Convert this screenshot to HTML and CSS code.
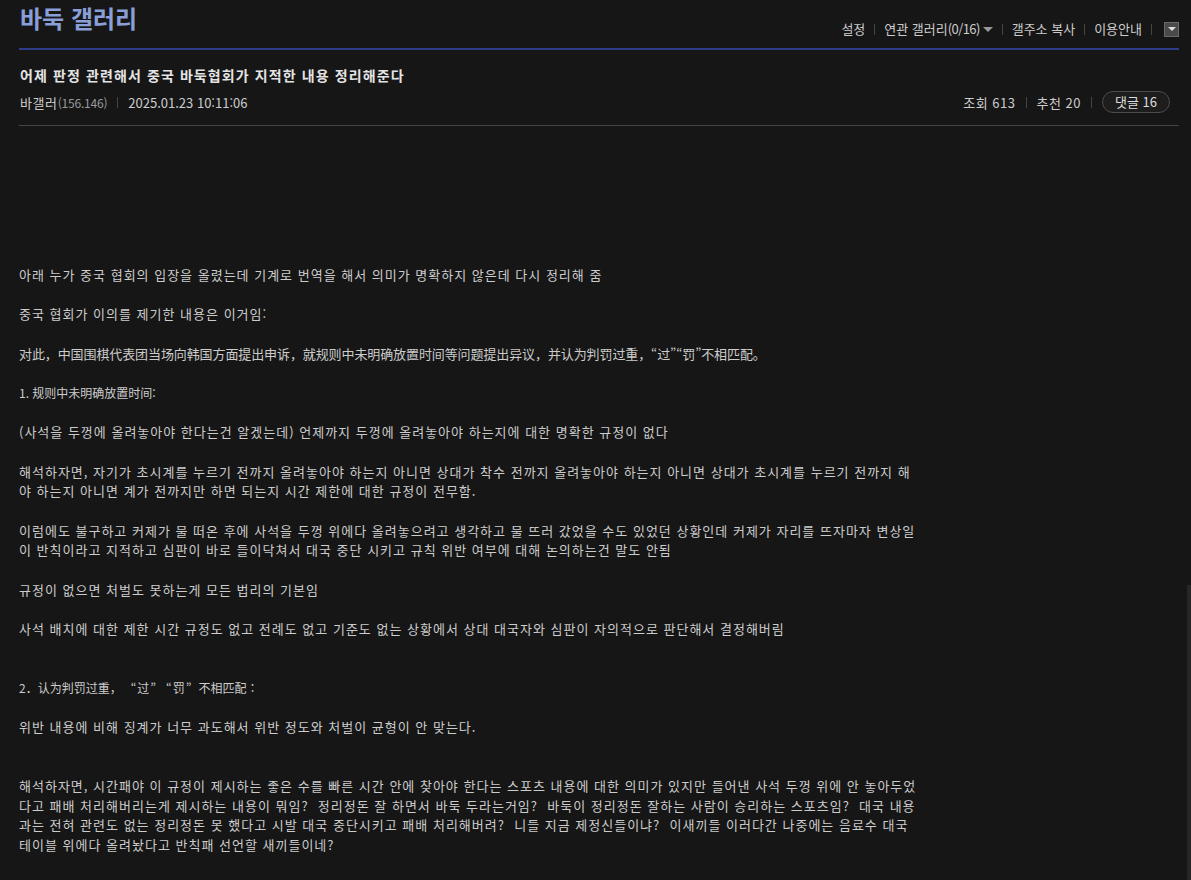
FILE: index.html
```html
<!DOCTYPE html>
<html lang="ko">
<head>
  <meta charset="UTF-8">
  <meta name="viewport" content="width=device-width, initial-scale=1.0">
  <title>바둑 갤러리</title>
  <link rel="stylesheet" href="styles.css">
</head>
<body>
  <div class="container">
    <header class="gall-head">
      <h2 class="gall-title">바둑 갤러리</h2>
      <ul class="gall-menu">
        <li>설정</li>
        <li class="sep"></li>
        <li>연관 갤러리<span class="num">(0/16)</span><span class="caret"></span></li>
        <li class="sep"></li>
        <li>갤주소 복사</li>
        <li class="sep"></li>
        <li>이용안내</li>
        <li class="sep"></li>
        <li><button class="more-btn"><span class="caret white"></span></button></li>
      </ul>
    </header>

    <div class="view-head">
      <h3 class="view-title">어제 판정 관련해서 중국 바둑협회가 지적한 내용 정리해준다</h3>
      <div class="view-info">
        <div class="writer">
          <span class="nick">바갤러</span><span class="ip">(156.146)</span>
          <span class="sep"></span>
          <span class="date">2025.01.23 10:11:06</span>
        </div>
        <div class="stats">
          <span>조회 613</span>
          <span class="sep"></span>
          <span>추천 20</span>
          <span class="sep"></span>
          <span class="reply-btn">댓글 16</span>
        </div>
      </div>
    </div>

    <div class="view-body">
      <div class="ad-space"></div>
      <p>아래 누가 중국 협회의 입장을 올렸는데 기계로 번역을 해서 의미가 명확하지 않은데 다시 정리해 줌</p>
      <p>중국 협회가 이의를 제기한 내용은 이거임:</p>
      <p class="zh">对此，中国围棋代表团当场向韩国方面提出申诉，就规则中未明确放置时间等问题提出异议，并认为判罚过重，“过”“罚”不相匹配。</p>
      <p class="zh-small">1. 规则中未明确放置时间:</p>
      <p>(사석을 두껑에 올려놓아야 한다는건 알겠는데) 언제까지 두껑에 올려놓아야 하는지에 대한 명확한 규정이 없다</p>
      <p>해석하자면, 자기가 초시계를 누르기 전까지 올려놓아야 하는지 아니면 상대가 착수 전까지 올려놓아야 하는지 아니면 상대가 초시계를 누르기 전까지 해야 하는지 아니면 계가 전까지만 하면 되는지 시간 제한에 대한 규정이 전무함.</p>
      <p>이럼에도 불구하고 커제가 물 떠온 후에 사석을 두껑 위에다 올려놓으려고 생각하고 물 뜨러 갔었을 수도 있었던 상황인데 커제가 자리를 뜨자마자 변상일이 반칙이라고 지적하고 심판이 바로 들이닥쳐서 대국 중단 시키고 규칙 위반 여부에 대해 논의하는건 말도 안됨</p>
      <p>규정이 없으면 처벌도 못하는게 모든 법리의 기본임</p>
      <p class="gap">사석 배치에 대한 제한 시간 규정도 없고 전례도 없고 기준도 없는 상황에서 상대 대국자와 심판이 자의적으로 판단해서 결정해버림</p>
      <p class="zh-small">2．认为判罚过重，<span class="quote">“过”</span><span class="quote">“罚”</span>不相匹配：</p>
      <p class="gap">위반 내용에 비해 징계가 너무 과도해서 위반 정도와 처벌이 균형이 안 맞는다.</p>
      <p>해석하자면, 시간패야 이 규정이 제시하는 좋은 수를 빠른 시간 안에 찾아야 한다는 스포츠 내용에 대한 의미가 있지만 들어낸 사석 두껑 위에 안 놓아두었다고 패배 처리해버리는게 제시하는 내용이 뭐임?&nbsp; 정리정돈 잘 하면서 바둑 두라는거임?&nbsp; 바둑이 정리정돈 잘하는 사람이 승리하는 스포츠임?&nbsp; 대국 내용과는 전혀 관련도 없는 정리정돈 못 했다고 시발 대국 중단시키고 패배 처리해버려?&nbsp; 니들 지금 제정신들이냐?&nbsp; 이새끼들 이러다간 나중에는 음료수 대국 테이블 위에다 올려놨다고 반칙패 선언할 새끼들이네?</p>
    </div>
  </div>
  <div class="scroll-thumb"></div>
</body>
</html>
```

FILE: styles.css
```css
* {
  margin: 0;
  padding: 0;
  box-sizing: border-box;
}

body {
  background: #161616;
  color: #cccccc;
  font-family: "Noto Sans CJK KR", "Noto Sans", sans-serif;
  font-size: 13px;
  overflow: hidden;
}

.container {
  width: 1160px;
  margin-left: 19px;
}

.gall-head {
  display: flex;
  justify-content: space-between;
  height: 50px;
  border-bottom: 2px solid #2e3c8a;
}

.gall-title {
  font-size: 24px;
  font-weight: bold;
  line-height: 36px;
  color: #8a9ed8;
  padding-left: 1px;
}

.gall-menu {
  list-style: none;
  display: flex;
  align-items: center;
  height: 18px;
  margin-top: 20px;
  line-height: 18px;
  color: #cccccc;
}

.gall-menu li {
  display: flex;
  align-items: center;
}

.gall-menu .num {
  letter-spacing: -0.6px;
}

.sep {
  display: inline-block;
  width: 1px;
  height: 11px;
  background: #444444;
  margin: 0 9px;
}

.caret {
  display: inline-block;
  width: 0;
  height: 0;
  border-left: 5px solid transparent;
  border-right: 5px solid transparent;
  border-top: 5px solid #999999;
  margin-left: 3px;
}

.caret.white {
  border-left-width: 4px;
  border-right-width: 4px;
  border-top: 4px solid #dddddd;
  margin: 0;
}

.more-btn {
  width: 15px;
  height: 15px;
  margin-left: 3px;
  background: #4a4a4a;
  border: 1px solid #6a6a6a;
  display: flex;
  align-items: center;
  justify-content: center;
}

.view-head {
  padding-top: 16px;
  padding-bottom: 12px;
  border-bottom: 1px solid #444444;
}

.view-title {
  font-size: 14px;
  font-weight: bold;
  line-height: 19px;
  letter-spacing: 1.1px;
  color: #e4e4e4;
  padding-left: 1px;
}

.view-info {
  display: flex;
  justify-content: space-between;
  align-items: center;
  height: 22px;
  margin-top: 6px;
  padding-left: 1px;
}

.writer, .stats {
  display: flex;
  align-items: center;
}

.nick {
  letter-spacing: 0.6px;
}

.ip {
  font-size: 12px;
  color: #999999;
  letter-spacing: -0.2px;
}

.writer .sep {
  margin: 0 10px;
}

.stats {
  margin-right: 9px;
  letter-spacing: 0.5px;
}

.stats .sep {
  margin: 0 10px;
}

.reply-btn {
  height: 22px;
  line-height: 20px;
  padding: 0 12px;
  border: 1px solid #4c4c4c;
  border-radius: 11px;
  background: #1d1d1d;
  color: #dddddd;
  letter-spacing: 0;
}

.view-body {
  width: 902px;
  word-break: break-all;
  line-height: 19.66px;
  letter-spacing: 1px;
}

.ad-space {
  height: 139px;
}

.view-body p {
  margin-bottom: 19.66px;
}

.view-body p.gap {
  margin-bottom: 39.32px;
}

.view-body .zh {
  font-family: "Noto Sans CJK SC", sans-serif;
  letter-spacing: -0.1px;
}

.view-body .zh-small {
  font-family: "Noto Sans CJK SC", sans-serif;
  font-size: 12px;
  letter-spacing: 0;
}

.view-body .quote {
  letter-spacing: 1px;
  margin-left: 9px;
}

.view-body .quote + .quote {
  margin-right: 6px;
}

.scroll-thumb {
  position: fixed;
  right: 0;
  top: 585px;
  bottom: 0;
  width: 4px;
  background: #262626;
}
```
